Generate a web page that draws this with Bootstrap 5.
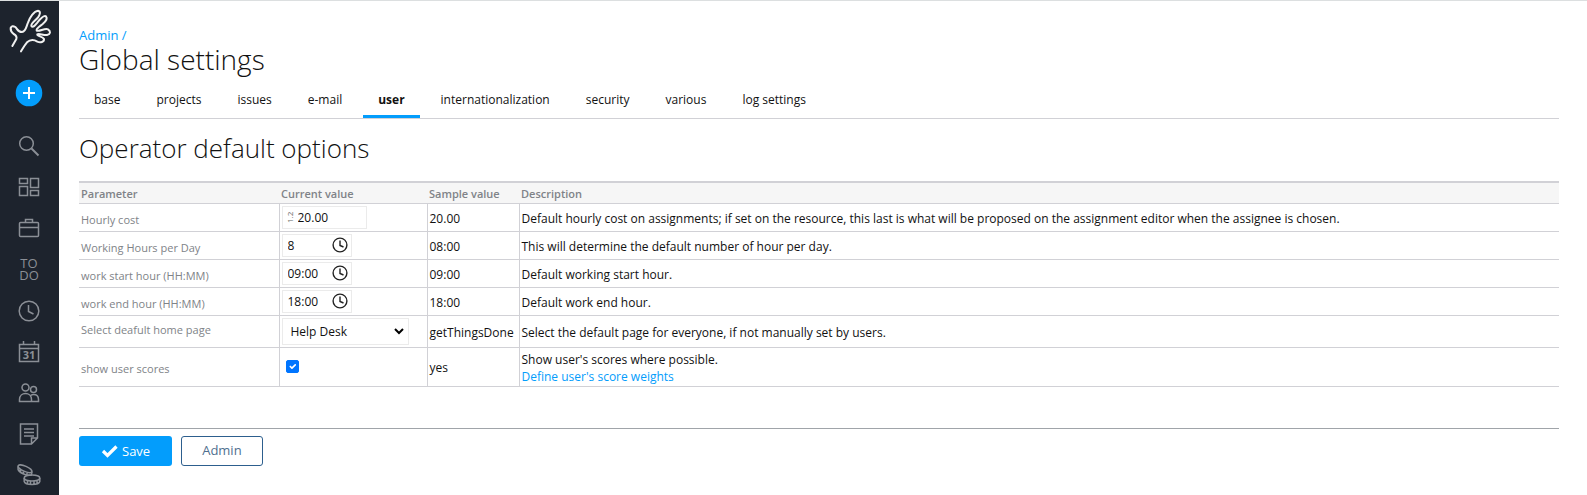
<!DOCTYPE html>
<html lang="en">
<head>
<meta charset="utf-8">
<meta name="viewport" content="width=device-width, initial-scale=1">
<title>Global settings</title>
<link href="https://cdn.jsdelivr.net/npm/bootstrap@5.3.0/dist/css/bootstrap.min.css" rel="stylesheet">
<style>
  :root { --tw-blue: #039dfc; --tw-line: #d1d1d6; --tw-grey: #808388; }
  body { font: 12px/17px "Open Sans", "Noto Sans", sans-serif; color: #111; background: #fff; border-top: 1px solid #dcdfe0; }
  a { color: var(--tw-blue); text-decoration: none; }
  .shell { min-height: calc(100vh - 1px); }
  .side { width: 59px; padding-right: 1px; background: #1d232d; color: #8b8f96; }
  .side a { color: inherit; height: 41px; }
  .side svg { fill: none; stroke: currentColor; stroke-width: 1.5; }
  .side .logo { height: 60px; color: #f0f0f0; }
  .side .logo svg { stroke-width: 2; stroke-linecap: round; stroke-linejoin: round; }
  .side .add { height: 64px; color: #fff; }
  .side .todo { height: 42px; font-size: 13px; line-height: 12px; }
  .page { padding: 26px 28px 0 20px; }
  .crumb { font-size: 13px; }
  h1, h2 { font-weight: 300; margin: 0; }
  h1 { font-size: 28px; line-height: 30px; }
  h2 { font-size: 26px; line-height: 34px; padding: 12px 0 16px; }
  .tabs { gap: 6px; border-bottom: 1px solid var(--tw-line); margin-top: 6px; }
  .tabs .nav-link { color: #111; padding: 11px 15px 7px; border-bottom: 3px solid transparent; }
  .tabs .nav-link.active { font-weight: 700; border-color: var(--tw-blue); }
  .opts { width: 100%; table-layout: fixed; border-top: 2px solid var(--tw-line); }
  .opts th, .opts td { padding: 0 2px; border-bottom: 1px solid var(--tw-line); }
  .opts thead th { height: 21px; padding-top: 1px; background: #f6f6f6; color: var(--tw-grey); font-size: 11px; font-weight: 600; }
  .opts tbody th { color: var(--tw-grey); font-size: 11px; font-weight: 400; padding-top: 4px; }
  .opts td { height: 28px; border-left: 1px solid var(--tw-line); white-space: nowrap; }
  .opts td + td { padding-top: 2px; }
  .c1 { width: 200px; } .c2 { width: 148px; } .c3 { width: 92px; }
  .field { height: 23px; border: 1px solid #ebebeb; width: 70px; padding: 0 3px 0 5px; }
  .field.num { width: 85px; padding-left: 2px; }
  .field input { flex: 1; min-width: 0; width: 0; border: 0; padding: 1px 0 0; outline: 0; color: #111; background: none; }
  .field svg { overflow: visible; }
  .opts .form-select { width: 127px; height: 27px; min-height: 0; border: 1px solid #ebebeb; border-radius: 0; font-size: 12px; line-height: 17px; color: #111; padding: 1px 20px 0 8px;
    background-image: url("data:image/svg+xml,%3Csvg xmlns='http://www.w3.org/2000/svg' viewBox='0 0 10 7'%3E%3Cpath d='M1 1l4 4 4-4' fill='none' stroke='%23000' stroke-width='2'/%3E%3C/svg%3E"); background-size: 10px 7px; background-position: right 4px center; }
  .opts .form-check-input { width: 13px; height: 13px; margin: 0 0 0 4px; border-radius: 2px; }
  .opts .form-check-input:checked { background-color: #0075ff; border-color: #0075ff; }
  .opts .tall td { height: 32px; }
  .opts .taller td { height: 39px; }
  .opts .tall th { padding-top: 0; padding-bottom: 4px; }
  .actions { margin-top: 41px; padding-top: 7px; gap: 9px; border-top: 1px solid #a0a4a9; }
  .actions .btn { height: 30px; border-radius: 3px; font-size: 13px; line-height: 17px; padding: 1px 21px 0; }
  .actions .save { background: var(--tw-blue); color: #fff; }
  .actions .plain { border: 1px solid #2d5f8e; color: #4f6f8f; background: #fff; padding: 0 20px; }
</style>
</head>
<body>
<div class="shell d-flex">
  <nav class="side d-flex flex-column flex-shrink-0" aria-label="Main">
    <a class="logo d-flex align-items-center justify-content-center" href="#" aria-label="Home">
      <svg class="ms-1" width="44" height="44" viewBox="29 25 132 132"><path stroke-width="6" d="M39 136L51 115Q54 106 43 100Q33 92 34 82Q38 73 48 79C55 85 54 94 68 94C80 93 81 76 86 66C91 50 104 31 116 30C126 32 121 43 116 50C108 60 94 69 96 76C101 83 109 72 114 66C121 57 132 42 140 47C146 54 137 64 130 70C120 78 109 84 112 90C119 94 136 82 146 86C155 92 154 100 143 103C133 105 119 97 114 101C112 107 130 107 134 115C135 124 123 127 114 123C104 117 92 117 83 125Q77 132 65 152"/></svg>
    </a>
    <a class="add d-flex align-items-center justify-content-center" href="#" aria-label="Add">
      <svg width="28" height="28" viewBox="0 0 28 28"><circle cx="14" cy="14" r="13.3" fill="#039dfc" stroke="none"/><path d="M14 8v12M8 14h12" stroke-width="2"/></svg>
    </a>
    <a class="d-flex align-items-center justify-content-center" href="#" aria-label="Search"><svg width="22" height="22" viewBox="0 0 22 22"><circle cx="8.500" cy="8.500" r="6.800"/><path d="M13.500 13.500l7 7" stroke-width="2"/></svg></a>
    <a class="d-flex align-items-center justify-content-center" href="#" aria-label="Dashboard"><svg width="22" height="22" viewBox="0 0 22 22" stroke-width="1.300"><path d="M1.500 2.500h8v5h-8zM12.500 2.500h8v9h-8zM1.500 10.500h8v9h-8zM12.500 14.500h8v5h-8z"/></svg></a>
    <a class="d-flex align-items-center justify-content-center" href="#" aria-label="Projects"><svg width="22" height="22" viewBox="0 0 22 22"><rect x="1.500" y="5.500" width="19" height="14" rx="1"/><path d="M7.500 5.500v-3h7v3M1.500 10.500h19"/></svg></a>
    <a class="todo d-flex align-items-center justify-content-center text-center" href="#">TO<br>DO</a>
    <a class="d-flex align-items-center justify-content-center" href="#" aria-label="Time"><svg width="22" height="22" viewBox="0 0 22 22"><circle cx="11" cy="11" r="9.800"/><path d="M10.500 5v6.500l5 2.500"/></svg></a>
    <a class="d-flex align-items-center justify-content-center" href="#" aria-label="Calendar"><svg width="22" height="22" viewBox="0 0 22 22"><path d="M1.500 3.500h19v17h-19zM1.500 7.500h19M5.500 0v4M16.500 0v4"/><text x="11" y="18" text-anchor="middle" font-size="11" font-weight="700" fill="currentColor" stroke="none">31</text></svg></a>
    <a class="d-flex align-items-center justify-content-center" href="#" aria-label="People"><svg width="22" height="22" viewBox="0 0 22 22"><circle cx="7.500" cy="5.500" r="3.500"/><circle cx="15.500" cy="7.500" r="3"/><path d="M1.500 19.500v-2c0-4 3-6 6-6s6 2 6 6v2zM13.500 19.500h7v-2c0-3-2-5-5-5q-1.500 0-2.800 1"/></svg></a>
    <a class="d-flex align-items-center justify-content-center" href="#" aria-label="Notes"><svg width="22" height="22" viewBox="0 0 22 22"><path d="M2.500 1h17v14l-6 6h-11zM19.500 15h-6v6M6 6h10M6 9.500h10M6 13h10"/></svg></a>
    <a class="d-flex align-items-center justify-content-center" href="#" aria-label="Costs"><svg width="24" height="22" viewBox="0 0 24 22" stroke-width="1.200"><ellipse cx="8" cy="4.800" rx="7.500" ry="2.600" transform="rotate(24 8 4.800)"/><path d="M1.200 2.500L1 5.200C2 8.500 9 12 14.300 11.200L15 8M3.500 5.500v2.500M6.500 7.500v2.500M10 9v2.500"/><ellipse cx="15" cy="14" rx="7.800" ry="3"/><path d="M7.200 14v3.500c1 4 14.600 4 15.600 0V14M10.500 16.500v3M13.500 17v3.500M17 17v3.500M20 16.500v3"/></svg></a>
  </nav>

  <main class="page flex-grow-1">
    <a class="crumb d-block" href="#">Admin /</a>
    <h1>Global settings</h1>
    <ul class="tabs nav">
      <li class="nav-item"><a class="nav-link" href="#">base</a></li>
      <li class="nav-item"><a class="nav-link" href="#">projects</a></li>
      <li class="nav-item"><a class="nav-link" href="#">issues</a></li>
      <li class="nav-item"><a class="nav-link" href="#">e-mail</a></li>
      <li class="nav-item"><a class="nav-link active" aria-current="page" href="#">user</a></li>
      <li class="nav-item"><a class="nav-link" href="#">internationalization</a></li>
      <li class="nav-item"><a class="nav-link" href="#">security</a></li>
      <li class="nav-item"><a class="nav-link" href="#">various</a></li>
      <li class="nav-item"><a class="nav-link" href="#">log settings</a></li>
    </ul>
    <h2>Operator default options</h2>
    <form>
      <table class="opts align-middle">
        <colgroup><col class="c1"><col class="c2"><col class="c3"><col></colgroup>
        <thead><tr><th scope="col">Parameter</th><th scope="col">Current value</th><th scope="col">Sample value</th><th scope="col">Description</th></tr></thead>
        <tbody>
          <tr>
            <th scope="row"><label for="cost">Hourly cost</label></th>
            <td><div class="field num d-flex align-items-center"><svg class="me-1" width="9" height="16" viewBox="0 0 9 16" aria-hidden="true"><text transform="translate(8 14) rotate(-90)" font-size="8" fill="#666">1.2</text></svg><input id="cost" type="text" value="20.00"></div></td>
            <td>20.00</td>
            <td>Default hourly cost on assignments; if set on the resource, this last is what will be proposed on the assignment editor when the assignee is chosen.</td>
          </tr>
          <tr>
            <th scope="row"><label for="hours">Working Hours per Day</label></th>
            <td><div class="field d-flex align-items-center"><input id="hours" type="text" value="8"><svg width="16" height="16" viewBox="0 0 16 16" fill="none" stroke="#222" stroke-width="1.400"><circle cx="8" cy="8" r="6.900"/><path d="M8 3.500v5l3.500 1.500"/></svg></div></td>
            <td>08:00</td>
            <td>This will determine the default number of hour per day.</td>
          </tr>
          <tr>
            <th scope="row"><label for="start">work start hour (HH:MM)</label></th>
            <td><div class="field d-flex align-items-center"><input id="start" type="text" value="09:00"><svg width="16" height="16" viewBox="0 0 16 16" fill="none" stroke="#222" stroke-width="1.400"><circle cx="8" cy="8" r="6.900"/><path d="M8 3.500v5l3.500 1.500"/></svg></div></td>
            <td>09:00</td>
            <td>Default working start hour.</td>
          </tr>
          <tr>
            <th scope="row"><label for="end">work end hour (HH:MM)</label></th>
            <td><div class="field d-flex align-items-center"><input id="end" type="text" value="18:00"><svg width="16" height="16" viewBox="0 0 16 16" fill="none" stroke="#222" stroke-width="1.400"><circle cx="8" cy="8" r="6.900"/><path d="M8 3.500v5l3.500 1.500"/></svg></div></td>
            <td>18:00</td>
            <td>Default work end hour.</td>
          </tr>
          <tr class="tall">
            <th scope="row"><label for="home">Select deafult home page</label></th>
            <td><select id="home" class="form-select"><option>Help Desk</option></select></td>
            <td>getThingsDone</td>
            <td>Select the default page for everyone, if not manually set by users.</td>
          </tr>
          <tr class="taller">
            <th scope="row"><label for="scores">show user scores</label></th>
            <td><input id="scores" class="form-check-input d-block" type="checkbox" checked></td>
            <td>yes</td>
            <td>Show user's scores where possible.<br><a href="#">Define user's score weights</a></td>
          </tr>
        </tbody>
      </table>
      <div class="actions d-flex">
        <button class="save btn d-flex align-items-center" type="button"><svg class="me-1" width="17" height="14" viewBox="0 0 17 14" fill="none" stroke="#fff" stroke-width="3.200"><path d="M2 7l4.500 4.500L15.500 2.500"/></svg>Save</button>
        <button class="plain btn" type="button">Admin</button>
      </div>
    </form>
  </main>
</div>
<script src="https://cdn.jsdelivr.net/npm/bootstrap@5.3.0/dist/js/bootstrap.bundle.min.js"></script>
</body>
</html>
